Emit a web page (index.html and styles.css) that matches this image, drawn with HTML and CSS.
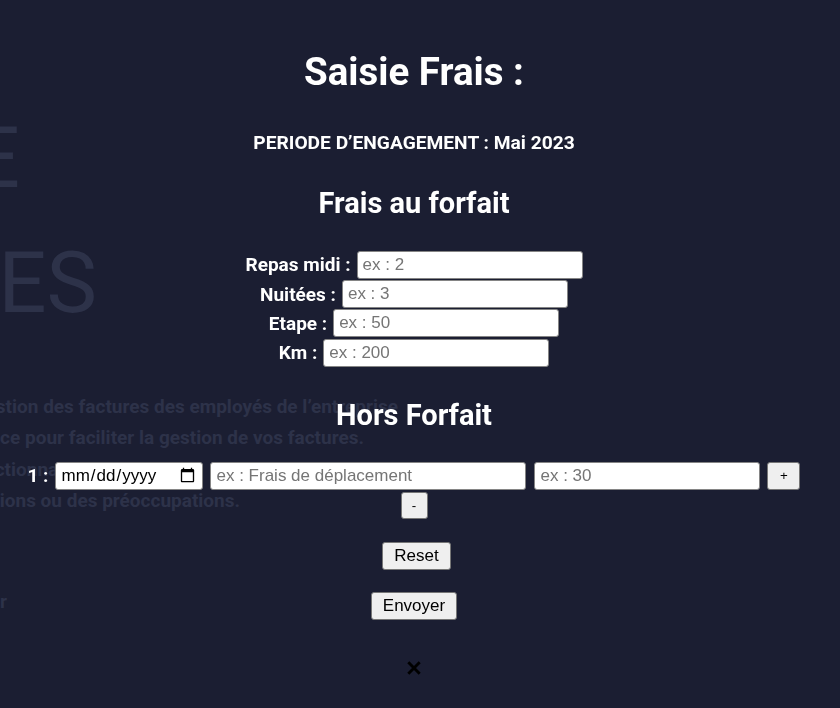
FILE: index.html
```html
<!DOCTYPE html>
<html lang="fr">
<head>
<meta charset="utf-8">
<title>Saisie Frais</title>
<link rel="stylesheet" href="styles.css">
</head>
<body>
<div class="bg">
  <div class="hero">
    <div class="hero-line hero-1">GESTION DE</div>
    <div class="hero-line hero-2">FACTURES</div>
  </div>
  <div class="intro">
    <div class="intro-line intro-1">Application de gestion des factures des employés de l’entreprise</div>
    <div class="intro-line intro-2">Un service pour faciliter la gestion de vos factures.</div>
    <div class="intro-line intro-3">Découvrez nos fonctionnalités avancées</div>
    <div class="intro-line intro-4">N’hésitez pas à nous contacter pour des questions ou des préoccupations.</div>
  </div>
  <div class="bg-link">Se connecter</div>
</div>

<div class="modal">
  <h1 class="title">Saisie Frais :</h1>
  <p class="period">PERIODE D’ENGAGEMENT : Mai 2023</p>
  <h2 class="section">Frais au forfait</h2>
  <div class="forfait">
    <div class="frow"><label class="lbl">Repas midi :</label><input class="field" type="text" placeholder="ex : 2"></div>
    <div class="frow"><label class="lbl">Nuitées :</label><input class="field" type="text" placeholder="ex : 3"></div>
    <div class="frow"><label class="lbl">Etape :</label><input class="field" type="text" placeholder="ex : 50"></div>
    <div class="frow"><label class="lbl">Km :</label><input class="field" type="text" placeholder="ex : 200"></div>
  </div>
  <h2 class="section section-hf">Hors Forfait</h2>
  <div class="hfrow">
    <label class="lbl">1 :</label>
    <input class="field field-date" type="date">
    <input class="field field-lib" type="text" placeholder="ex : Frais de déplacement">
    <input class="field field-amt" type="text" placeholder="ex : 30">
    <button class="btn btn-small btn-plus" type="button">+</button>
  </div>
  <div class="minus-line"><button class="btn btn-small btn-minus" type="button">-</button></div>
  <button class="btn btn-main btn-reset" type="reset">Reset</button>
  <button class="btn btn-main btn-send" type="submit">Envoyer</button>
  <button class="close" type="button" aria-label="Fermer">
    <svg width="14" height="14" viewBox="0 0 14 14"><path d="M1.3 1.3 L12.7 12.7 M12.7 1.3 L1.3 12.7" stroke="#000" stroke-width="2.9" stroke-linecap="butt" fill="none"/></svg>
  </button>
</div>
</body>
</html>
```

FILE: styles.css
```css
html, body {
  margin: 0;
  padding: 0;
  height: 100%;
  overflow: hidden;
}
body {
  background: #1b1e32;
  font-family: Roboto, "Liberation Sans", Arial, sans-serif;
}

/* background page (slid mostly off-screen) */
.bg {
  margin-left: -700px;
  color: #2d3249;
}
.hero {
  padding-top: 95.6px;
  font: 400 85px/125px Roboto, sans-serif;
}
.hero-line { text-align: right; white-space: nowrap; }
.hero-1 { width: 720px; }
.hero-2 { width: 797px; }

.intro {
  margin-top: 45.6px;
  font: 700 19px/31.3px Roboto, sans-serif;
}
.intro-line { text-align: right; white-space: nowrap; }
.intro-1 { width: 1098px; }
.intro-2 { width: 1064px; }
.intro-3 { width: 880px; }
.intro-4 { width: 940px; }
.bg-link {
  margin-top: 70px;
  width: 707px;
  text-align: right;
  font: 700 19px/31.3px Roboto, sans-serif;
  white-space: nowrap;
}

/* modal overlay */
.modal {
  position: fixed;
  inset: 0;
  box-sizing: border-box;
  padding: 53px 12px 0 0;
  display: flex;
  flex-direction: column;
  align-items: center;
  color: #fff;
}
.title {
  margin: 0;
  font: 700 38.5px/1 Roboto, sans-serif;
}
.period {
  margin: 41px 0 0;
  font: 700 19.2px/1 Roboto, sans-serif;
}
.section {
  margin: 37px 0 0;
  font: 700 29px/1 Roboto, sans-serif;
}
.section-hf { margin-top: 34px; }

.forfait {
  margin-top: 33px;
  display: flex;
  flex-direction: column;
  align-items: center;
  gap: 1.33px;
}
.frow {
  display: flex;
  align-items: center;
  gap: 6px;
  height: 28px;
}
.lbl {
  font: 700 19px/1 Roboto, sans-serif;
  color: #fff;
}
.field {
  box-sizing: border-box;
  width: 226px;
  height: 28px;
  margin: 0;
  padding: 3px 5px;
  border: 1px solid #858585;
  border-radius: 3px;
  background: #fff;
  color: #000;
  font: 400 17px/20px Arial, "Liberation Sans", sans-serif;
}
.field::placeholder { color: #757575; }

.hfrow {
  margin-top: 32px;
  display: flex;
  align-items: center;
  gap: 7px;
  height: 28px;
}
.field-date { width: 148px; padding: 3px 4px; }
.field-lib { width: 316px; }
.field-amt { width: 226px; margin-left: 1px; }

.btn {
  box-sizing: border-box;
  margin: 0;
  border: 1px solid #767676;
  border-radius: 3px;
  background: #efefef;
  color: #000;
  font-family: Arial, "Liberation Sans", sans-serif;
  padding: 0;
}
.btn-small {
  font-size: 13.33px;
  line-height: 15px;
}
.btn-plus { width: 33px; height: 28px; }
.minus-line { margin-top: 2px; display: flex; }
.btn-minus { width: 27px; height: 27px; }

.btn-main {
  font-size: 17px;
  line-height: 20px;
  padding: 3px 11px;
  height: 28px;
}
.btn-reset { margin-top: 23px; margin-left: 5px; }
.btn-send { margin-top: 22px; }

.close {
  margin-top: 41px;
  padding: 0;
  border: 0;
  background: transparent;
  width: 14px;
  height: 14px;
  display: flex;
}
```
